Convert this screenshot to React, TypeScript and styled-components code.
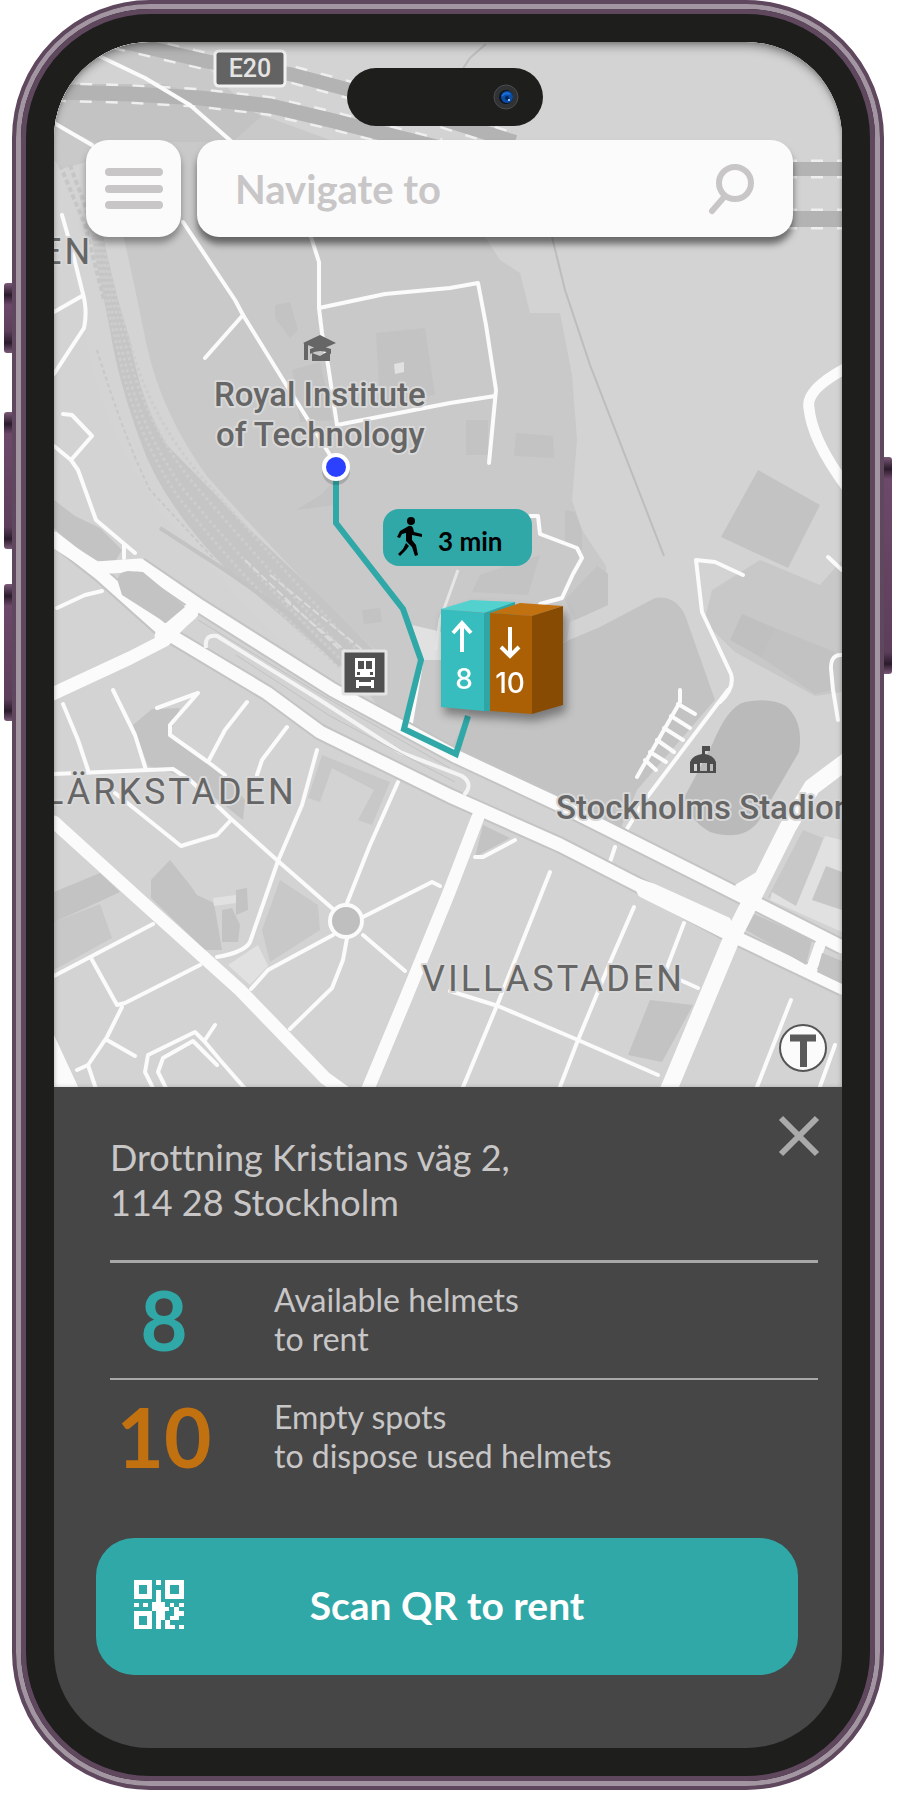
import React from "react";
import styled, { createGlobalStyle } from "styled-components";

const color = {
  frame: "#5f475e",
  frameLight: "#a495a3",
  bezel: "#1e1e1c",
  panel: "#464646",
  teal: "#30a8a8",
  orange: "#c27110",
  muted: "#c8c6c7",
  surface: "#fbfbfb",
};

const GlobalStyle = createGlobalStyle`
  * { box-sizing: border-box; }
  body {
    margin: 0;
    background: #fff;
    font-family: Lato, "Liberation Sans", sans-serif;
    font-variant-ligatures: none;
  }
  button, input { font: inherit; border: 0; padding: 0; margin: 0; background: none; }
  button { cursor: pointer; }
`;

const Stage = styled.main`
  display: flex;
  justify-content: center;
  padding: 0 14px 6px 12px;
`;

const Phone = styled.div`
  position: relative;
  flex: 1;
  min-width: 0;
  max-width: 872px;
  border-radius: 138px;
  border: 4px solid ${color.frame};
  background: ${color.bezel};
`;

const Rim = styled.div`
  border: 5px solid ${color.frameLight};
  border-radius: 134px;
`;

const Bezel = styled.div`
  border: 5px solid ${color.frame};
  border-radius: 129px;
  padding: 28px;
`;

const SideButton = styled.span<{ $side: "left" | "right"; $top: number; $height: number }>`
  position: absolute;
  ${(p) => p.$side}: -12px;
  top: ${(p) => p.$top}px;
  width: 8px;
  height: ${(p) => p.$height}px;
  border-radius: ${(p) => (p.$side === "left" ? "3px 0 0 3px" : "0 3px 3px 0")};
  background: linear-gradient(#7b5a78, #2b1a2c 12px, #6d4969 22px, #5c3e5a calc(100% - 22px), #2b1a2c calc(100% - 10px), #7b5a78);
`;

const Screen = styled.div`
  position: relative;
  border-radius: 96px;
  overflow: hidden;
  background: ${color.panel};
`;

const MapArea = styled.section`
  position: relative;
  display: flex;
  justify-content: center;
  overflow: hidden;
  background: #d3d3d3;
  &::after {
    content: "";
    position: absolute;
    inset: 0;
    pointer-events: none;
    box-shadow: inset 0 8px 10px -4px rgba(0, 0, 0, 0.38), inset 0 0 4px rgba(0, 0, 0, 0.2);
    border-radius: 96px 96px 0 0;
  }
`;

const MapDrawing = styled.svg`
  flex: none;
  display: block;
  width: 788px;
  height: 1045px;
`;

const Island = styled.div`
  position: absolute;
  z-index: 2;
  top: 26px;
  left: calc(50% - 101px);
  width: 196px;
  height: 58px;
  border-radius: 29px;
  background: ${color.bezel};
  display: flex;
  align-items: center;
  justify-content: flex-end;
  padding-right: 24px;
`;

const SearchBar = styled.form`
  position: absolute;
  z-index: 2;
  top: 98px;
  left: 32px;
  right: 49px;
  display: flex;
  gap: 16px;
  height: 97px;
`;

const MenuButton = styled.button`
  flex: none;
  width: 95px;
  border-radius: 22px;
  background: ${color.surface};
  box-shadow: 0 6px 7px rgba(0, 0, 0, 0.35);
  display: grid;
  place-items: center;
`;

const SearchField = styled.label`
  flex: 1;
  min-width: 0;
  display: flex;
  align-items: center;
  padding: 0 38px;
  border-radius: 22px;
  background: ${color.surface};
  box-shadow: 0 7px 7px rgba(0, 0, 0, 0.5);
`;

const SearchInput = styled.input`
  flex: 1;
  min-width: 0;
  height: 60px;
  font-size: 40px;
  font-weight: 700;
  color: #464646;
  outline: 0;
  &::placeholder { color: ${color.muted}; opacity: 1; }
`;

const WalkTime = styled.div`
  position: absolute;
  top: 467px;
  left: calc(50% - 65px);
  width: 149px;
  height: 57px;
  border-radius: 16px;
  background: ${color.teal};
  display: flex;
  align-items: center;
  gap: 15px;
  padding: 6px 0 0 14px;
  font-size: 26px;
  font-weight: 700;
  color: #000;
`;

const WalkIcon = styled.svg`
  margin-top: -8px;
`;

const StationPin = styled.button`
  position: absolute;
  top: 556px;
  left: calc(50% - 8px);
  filter: drop-shadow(3px 7px 5px rgba(0, 0, 0, 0.38));
  svg { display: block; }
`;

const Panel = styled.section`
  padding: 0 24px 73px 42px;
  color: ${color.muted};
`;

const PanelHeader = styled.header`
  display: flex;
  justify-content: space-between;
  align-items: flex-start;
  padding: 28px 0 35px 14px;
`;

const Address = styled.address`
  padding-top: 20px;
  font-style: normal;
  font-size: 36px;
  line-height: 45px;
`;

const CloseButton = styled.button`
  display: block;
  height: 42px;
  svg { display: block; overflow: visible; }
`;

const Facts = styled.dl`
  margin: 0 0 0 14px;
`;

const Fact = styled.div<{ $rule: number }>`
  display: flex;
  flex-direction: row-reverse;
  padding: 17px 0 20px;
  border-top: ${(p) => p.$rule}px solid #a8a8a8;
`;

const FactLabel = styled.dt`
  flex: 1;
  font-size: 32px;
  line-height: 39px;
`;

const FactValue = styled.dd<{ $color: string }>`
  width: 108px;
  margin: 0 56px 0 0;
  text-align: center;
  font-size: 82px;
  font-weight: 700;
  line-height: 78px;
  color: ${(p) => p.$color};
`;

const ScanButton = styled.button`
  display: grid;
  grid-template-columns: 50px 1fr 50px;
  align-items: center;
  width: calc(100% - 20px);
  height: 137px;
  margin-top: 43px;
  padding: 0 38px 4px;
  border-radius: 38px;
  background: ${color.teal};
  color: #fff;
  font-size: 39px;
  font-weight: 700;
`;

const MapLabel = styled.text`
  font-family: Roboto, "Liberation Sans", sans-serif;
  font-size: 33px;
  font-weight: 500;
  fill: #666;
  stroke: #d8d8d8;
  stroke-width: 4px;
  stroke-linejoin: round;
  paint-order: stroke;
`;

const DistrictLabel = styled(MapLabel)`
  font-weight: 400;
  font-size: 36px;
  letter-spacing: 3px;
`;

const BlockShapes = styled.g`
  fill: #c3c3c3;
`;

const Streets = styled.g<{ $width: number }>`
  fill: none;
  stroke: #fbfbfb;
  stroke-width: ${(p) => p.$width}px;
  stroke-linejoin: round;
  stroke-linecap: round;
`;

const Motorway = ({ d, width }: { d: string; width: number }) => (
  <g fill="none">
    <path d={d} stroke="#efefef" strokeWidth={width + 5} strokeDasharray="12 14" />
    <path d={d} stroke="#b3b3b3" strokeWidth={width} />
  </g>
);

const tracks = [
  "M92 235 Q103 290 118 350 Q134 430 176 494 Q250 590 340 668",
  "M95 235 Q106 290 122 350 Q140 430 184 490 Q262 585 350 668",
  "M98 235 Q109 290 127 350 Q146 425 194 484 Q272 575 358 666",
  "M101 235 Q112 290 132 350 Q152 420 204 480 Q284 570 366 660",
];

function CityMap() {
  return (
    <MapDrawing viewBox="54 42 788 1045" role="img" aria-label="Map of Stockholm with walking route">
      <rect x="54" y="42" width="788" height="1049" fill="#d3d3d3" />

      {/* campus and park areas */}
      <path
        fill="#c9c9c9"
        d="M54 105 H230 L262 115 L330 140 L450 150 L485 237 L500 260 L520 273 L530 313 H560 L572 375 L577 440 L572 500 L582 530 L606 566 L608 605 L570 622 L567 641 L500 660 L455 752 L385 716 L345 660 L375 650 L310 588 L260 535 L200 472 L166 425 L150 390 L137 330 L115 280 L95 210 L54 160 Z"
      />
      <path fill="#c3c3c3" d="M54 84 H190 L262 116 L232 142 H95 L54 124 Z" />
      <path fill="#c9c9c9" d="M130 42 L200 60 L250 110 L150 80 L100 54 Z" />
      <BlockShapes>
        <path d="M450 750 L480 690 L567 641 L600 627 L655 598 Q675 595 685 615 L715 700 L637 790 L620 830 L560 800 Z" />
        <path d="M275 305 L290 302 L298 330 L290 338 L275 318 Z" />
        <path d="M376 333 L425 328 L435 395 L380 402 Z" />
        <path d="M466 420 H488 V455 H466 Z M516 433 L553 436 L554 458 L514 456 Z" />
        <path d="M292 370 L320 362 L333 420 L300 422 Z M296 510 L322 494 L335 480 V505 Z" />
        <path d="M480 575 L540 555 L528 595 L472 592 Z M362 610 L380 608 L382 622 L364 624 Z" />
        <path d="M565 510 L575 512 L582 530 V550 L565 545 Z M565 600 L597 566 L608 574 V605 L575 620 Z" />
        <path d="M758 470 L820 505 L788 568 L721 537 Z" />
        <path d="M54 500 L75 516 L100 528 L122 550 L114 563 L88 559 L54 528 Z" />
        <path d="M133 725 L152 709 L180 708 L169 735 L225 775 L245 800 L243 820 L190 778 L148 766 Z" />
        <path d="M151 880 L170 860 L190 885 L197 895 L214 903 L222 950 L205 950 L151 898 Z" />
        <path d="M236 890 L247 888 L248 910 L236 915 Z M222 910 L232 908 L240 925 L238 942 L222 942 Z" />
        <path d="M650 1000 L693 1005 L662 1062 L628 1055 Z M483 825 L510 838 L475 857 Z" />
        <path d="M54 892 L100 873 L120 892 L90 906 L54 922 Z" />
      </BlockShapes>
      <g fill="#c8c8c8">
        <path d="M54 922 L100 904 L112 938 L54 970 Z" />
        <path d="M280 880 L318 905 L320 930 L270 962 L262 930 Z" />
        <path d="M322 755 L390 782 L372 825 L358 820 L374 790 L332 768 L320 802 L308 798 Z" />
        <path d="M712 590 L760 560 L820 585 L842 560 V692 L815 696 L735 652 L704 622 Z" />
        <path d="M803 830 L823 838 L797 912 L768 897 Z" />
      </g>
      <path fill="#c0c0c0" d="M742 614 L775 628 L762 658 L730 640 Z" />
      <path fill="#c2c2c2" d="M775 628 L835 652 L832 690 L815 694 L762 658 Z" />
      <path
        fill="#bababa"
        d="M745 702 Q770 697 786 706 Q804 722 799 752 L758 822 Q742 842 710 832 Q686 818 685 796 L712 745 Q728 706 745 702 Z"
      />
      <g fill="#e1e1e1">
        <path d="M412 625 L442 632 V660 H422 Z" />
        <path d="M825 836 L842 840 V932 L770 900 L772 892 L796 906 Z" />
        <path d="M213 898 L236 895 V903 L214 906 Z M228 965 L258 945 L268 966 L250 985 Z M394 364 L404 362 V372 L395 374 Z" />
      </g>
      <path fill="#c6c6c6" d="M826 866 L842 872 V910 L812 900 Z" />

      {/* railway yard */}
      <g fill="none">
        <path d="M76 165 Q96 240 118 350 Q134 425 184 494 Q260 580 350 668" stroke="#d4d4d4" strokeWidth="58" />
        <path
          d="M91 235 H103 Q114 290 130 340 Q140 400 166 444 L250 530 L320 596 L374 650 L343 668 L300 632 L225 568 Q160 500 140 440 Q118 380 110 330 Z"
          fill="#c5c5c5"
        />
        {tracks.map((d) => (
          <path key={d} d={d} stroke="#cdcdcd" strokeWidth="3" strokeDasharray="3 3" />
        ))}
        <path d="M97 350 Q125 440 150 490 L215 560" stroke="#c8c8c8" strokeWidth="2" strokeDasharray="4 3" />
        <path d="M60 165 L85 225 L104 300 M70 165 L94 230" stroke="#c6c6c6" strokeWidth="4" strokeDasharray="5 3" />
        <path d="M160 528 L225 570 L290 615 L340 665" stroke="#c3c3c3" strokeWidth="4" />
        <path d="M270 575 L365 652 M285 600 L350 655 M245 560 L340 650" stroke="#dadada" strokeWidth="2" strokeDasharray="8 3" />
      </g>

      {/* tunnels */}
      <g fill="none" stroke="#bdbdbd" strokeWidth="2">
        <path d="M552 237 L565 290 L590 365 L664 556" />
        <path d="M486 44 L470 58 L462 70" />
      </g>
      <Motorway d="M115 40 L210 62 L290 74 L350 90 L420 112 L515 142" width={14} />
      <Motorway d="M54 92 L130 94 L200 98 L270 106 L330 120 L440 148" width={15} />
      <Motorway d="M785 169 H842" width={14} />
      <Motorway d="M785 219 H842" width={16} />

      <Streets $width={4}>
        <path d="M95 54 L145 78 L190 105 L232 142 M54 123 L92 145 M183 222 L235 300 L243 315 L285 383 L330 455" />
        <path d="M243 315 L205 358 M311 237 L319 262 V308 L322 333 L328 365 L337 425" />
        <path d="M319 308 L385 294 L450 288 L478 283 L486 325 L496 390 L489 463 M337 425 L450 403 L495 396" />
        <path d="M62 215 L72 250 L82 290 Q88 310 84 328 L54 374 M82 296 L54 312" />
        <path d="M63 414 L72 415 L92 436 L71 460 L54 446 M71 460 L78 470 L96 520 L135 553 M124 545 V558" />
        <path d="M530 516 H538 L540 534 L577 548 L582 558 L573 574 L562 598 L540 604" />
        <path d="M720 702 Q735 688 731 674 L702 612 L696 560 L715 562 L743 575 M828 557 L842 570" />
        <path d="M842 655 Q831 654 831 668 L833 690 L838 720" />
        <path d="M728 690 L645 800 L625 832 M680 690 V702 L637 777 M615 847 L609 865" />
        <path d="M678 704 L695 714 M671 716 L690 728 M664 728 L683 740 M657 740 L674 752 M650 752 L666 762 M645 760 L656 770" />
        <path d="M63 704 L78 740 L88 770 M54 774 L173 769 L190 780 L230 818 L278 861 L333 909" />
        <path d="M113 690 L135 735 L146 770 M157 708 L198 693 L170 725 V735 L208 762 L225 775 M247 702 L225 730 L208 762" />
        <path d="M287 727 L262 760 L257 775 M317 750 L302 805 L278 861 L250 942 Q245 952 217 957 M398 782 L370 845 L347 903" />
        <path d="M115 793 L181 846 L217 835 L231 820 M54 976 L153 924 M91 958 L117 1005 L125 1003 L200 965" />
        <path d="M122 1007 L107 1037 L88 1065 L77 1070 M107 1040 L135 1056 M88 1065 L97 1092" />
        <path d="M155 1092 L145 1072 L148 1055 L195 1032 L205 1042 L220 1060 L248 1092 M168 1092 L158 1072 L163 1058 L193 1041 L217 1065 M205 1040 L215 1025" />
        <path d="M363 917 L432 882 L440 886 M333 935 L268 970 L251 989 M347 938 L343 960 L332 988 L290 1029 M363 935 L405 971" />
        <path d="M550 872 L498 1003 L461 1092 M634 907 L611 960 L578 1040 L558 1092 M684 923 L666 970 M450 991 L498 1006 L578 1040 L658 1075 M680 980 L698 988" />
        <path d="M791 1000 L755 1092 M835 1045 L818 1092 M475 857 H483 L515 840 M57 608 L85 595 L102 591" />
        <path d="M410 729 L421 664" />
      </Streets>
      <path d="M458 570 L440 620 L436 650" fill="none" stroke="#e6e6e6" strokeWidth="3" />
      <circle cx="346" cy="921" r="16" fill="#bfbfbf" stroke="#fbfbfb" strokeWidth="4" />

      {/* avenues */}
      <g fill="none" stroke="#c4c4c4" strokeWidth="17">
        <path d="M140 565 L200 606 L333 690 L455 756 L560 805 L735 893 L842 947 M54 538 L100 574 L165 632 L267 693 L320 732 L450 796 L560 845 L640 886 L725 932 L842 988" />
      </g>
      <Streets $width={13}>
        <path d="M54 541 L96 568 L140 565 L200 606 L333 690 L455 756 L560 805 L735 893 L842 947" />
        <path d="M54 538 L100 574 L165 632 L267 693 L320 732 L450 796 L560 845 L640 886 L725 932 L842 988" />
        <path d="M185 618 L165 640 L130 658 L48 696 M54 822 L140 900 L240 990 L325 1078 L350 1096" />
        <path d="M478 817 L448 895 L405 1000 L365 1096" />
      </Streets>
      <Streets $width={17}>
        <path d="M848 760 L812 787 L788 827 L758 887 L731 940 L666 1096 M190 612 L163 636 M645 890 L725 930" />
      </Streets>
      <Streets $width={11}>
        <path d="M846 368 Q805 390 809 408 Q812 440 846 486 M820 945 L813 965" />
      </Streets>
      <path fill="#fbfbfb" d="M54 1035 L80 1091 H54 Z M620 872 L655 884 L730 918 L738 938 L650 900 Z M735 885 L760 870 L750 905 Z" />
      <path fill="#c3c3c3" d="M118 582 Q117 572 128 571 L143 572 L185 607 L166 623 L122 595 Z M746 930 L754 914 L812 940 L806 965 Z M822 953 L842 961 V984 L817 972 Z" />
      <g fill="none">
        <path d="M206 648 Q204 634 217 636 L320 700 L400 752 L462 776 Q474 784 464 795" stroke="#f4f4f4" strokeWidth="4" />
        <path d="M198 620 L320 694 L450 768 M236 655 L330 716 L455 782" stroke="#c2c2c2" strokeWidth="1" />
      </g>

      {/* labels */}
      <MapLabel x="214" y="406">Royal Institute</MapLabel>
      <MapLabel x="216" y="446">of Technology</MapLabel>
      <MapLabel x="556" y="819">Stockholms Stadion</MapLabel>
      <DistrictLabel x="41" y="264">EN</DistrictLabel>
      <DistrictLabel x="44" y="804">LÄRKSTADEN</DistrictLabel>
      <DistrictLabel x="422" y="991">VILLASTADEN</DistrictLabel>
      <rect x="215" y="51" width="70" height="35" rx="4" fill="#636363" stroke="#f0f0f0" strokeWidth="3" />
      <text x="250" y="77" textAnchor="middle" fontFamily="Roboto, sans-serif" fontSize="25" fontWeight="500" fill="#e4e4e4">E20</text>

      {/* point-of-interest symbols */}
      <path
        fill="#666"
        d="M303 343 L320 335 L336 343 L320 350 Z M304 343 h4 v17 h-4 Z M310 349 Q320 344 331 349 V354 Q320 348 310 354 Z M312 353 L320 356 L330 350 V361 H312 Z"
      />
      <path
        fill="#4d4d4d"
        fillRule="evenodd"
        d="M702 746 H710 V751 H705 V754 Q713 755 716 762 V773 H690 V762 Q693 755 702 754 Z M694 764 V771 H697 V764 Z M700 763 V771 H707 V763 Z M710 764 V771 H713 V764 Z"
      />
      <g>
        <rect x="343" y="651" width="43" height="43" rx="1" fill="#505050" stroke="#e4e4e4" strokeWidth="3" />
        <path fill="#fff" fillRule="evenodd" d="M355 658 H375 V677 H355 Z M358 661 V669 H364 V661 Z M366 661 V669 H372 V661 Z M357 672 V675 H360 V672 Z M370 672 V675 H373 V672 Z M356 680 H359 V682 H371 V680 H374 V688 H371 V686 H359 V688 H356 Z" />
      </g>
      <circle cx="803" cy="1048" r="23" fill="#fbfbfb" stroke="#555" strokeWidth="2" />
      <path d="M790 1038 H816 M803.5 1038 V1067" stroke="#5a5a5a" strokeWidth="7" />

      {/* walking route */}
      <path d="M336 478 V523 L403 609 L421 660 L404 729 L456 754 L468 716" fill="none" stroke={color.teal} strokeWidth="6" />
      <circle cx="336" cy="471" r="14" fill="#000" opacity="0.16" />
      <circle cx="336" cy="467" r="14" fill="#fff" />
      <circle cx="336" cy="467" r="10" fill="#2b41ff" />
    </MapDrawing>
  );
}

function Station() {
  return (
    <StationPin type="button" aria-label="Helmet station">
      <svg width="126" height="118" viewBox="440 598 126 118" fontFamily="Inter, sans-serif" fontSize="28" fontWeight="500" textAnchor="middle">
        <path fill="#53d1cf" d="M441 609 L471 600 L515 602 V606 L486 613 Z" />
        <path fill="#38bdbe" d="M441 609 L484 613 V711 L441 707 Z" />
        <path fill="#2fa6a5" d="M484 613 L515 602 V711 H484 Z" />
        <path fill="#c27110" d="M490 613 L520 603 L563 606 L532 616 Z" />
        <path fill="#ab6006" d="M490 613 L532 616 V714 L490 711 Z" />
        <path fill="#874b03" d="M532 616 L563 606 V705 L532 714 Z" />
        <g fill="none" stroke="#fff" strokeWidth="4">
          <path d="M462 652 V625 M453 633 L462 623 L471 633" />
          <path d="M510 627 V655 M501 647 L510 656 L519 647" />
        </g>
        <text x="464" y="689" fill="#fff">8</text>
        <text x="510" y="693" fill="#fff">10</text>
      </svg>
    </StationPin>
  );
}

function QrIcon() {
  return (
    <svg width="50" height="50" viewBox="0 0 50 50" fill="#fff" aria-hidden="true">
      <path fillRule="evenodd" d="M0 0 H18 V19 H0 Z M5 5 V14 H13 V5 Z M31 0 H50 V19 H31 Z M36 5 V14 H45 V5 Z M0 31 H18 V49 H0 Z M5 36 V45 H13 V36 Z" />
      <path d="M22 0 h5 v5 h-5 Z M22 10 h5 v12 h4 v5 h4 v4 h-4 v9 h-4 v9 h-5 v-18 h-4 v-9 h4 Z M0 23 h5 v4 h-5 Z M9 23 h5 v4 h-5 Z M36 23 h4 v4 h-4 Z M45 23 h5 v4 h-5 Z M40 27 h5 v4 h-5 Z M45 31 h5 v5 h-5 v4 h-9 v-4 h4 v-5 h5 Z M31 40 h5 v5 h5 v4 h-10 Z M45 45 h5 v4 h-5 Z" />
    </svg>
  );
}

const facts = [
  { value: 8, tint: color.teal, lines: ["Available helmets", "to rent"], rule: 3 },
  { value: 10, tint: color.orange, lines: ["Empty spots", "to dispose used helmets"], rule: 2 },
];

export default function App() {
  return (
    <>
      <GlobalStyle />
      <Stage>
        <Phone>
          <SideButton $side="left" $top={279} $height={70} />
          <SideButton $side="left" $top={408} $height={137} />
          <SideButton $side="left" $top={580} $height={137} />
          <SideButton $side="right" $top={453} $height={217} />
          <Rim>
            <Bezel>
              <Screen>
                <Island>
                  <svg width="26" height="26" viewBox="0 0 26 26" aria-hidden="true">
                    <circle cx="13" cy="13" r="12" fill="#303234" stroke="#4b4d50" />
                    <circle cx="13" cy="13" r="7" fill="#0b1420" />
                    <circle cx="14" cy="13" r="6" fill="#0a4da8" />
                    <path d="M9 12 Q12 8 17 10" stroke="#1b6fd6" strokeWidth="2" fill="none" />
                    <circle cx="14" cy="14" r="2" fill="#06254f" />
                    <circle cx="16" cy="16" r="1" fill="#cfe2ff" />
                  </svg>
                </Island>
                <MapArea>
                  <CityMap />
                  <SearchBar role="search">
                    <MenuButton type="button" aria-label="Menu">
                      <svg width="60" height="44" viewBox="0 0 60 44" stroke={color.muted} strokeWidth="8" strokeLinecap="round">
                        <path d="M5 5 H55 M5 22 H55 M5 38 H55" />
                      </svg>
                    </MenuButton>
                    <SearchField>
                      <SearchInput type="text" placeholder="Navigate to" aria-label="Navigate to" />
                      <svg width="48" height="54" viewBox="0 0 48 54" fill="none" stroke={color.muted} strokeWidth="6" aria-hidden="true">
                        <circle cx="28" cy="21" r="16" />
                        <path d="M18 34 L5 49" strokeLinecap="round" />
                      </svg>
                    </SearchField>
                  </SearchBar>
                  <WalkTime>
                    <WalkIcon width="26" height="40" viewBox="0 0 26 40" aria-hidden="true">
                      <circle cx="14" cy="4" r="4" />
                      <path d="M10 10 Q14 7 16 11 L17 15 L25 17 V20 L15 18 L15 23 L19 28 L21 38 L18 39 L15 30 L9 24 L9 16 L5 17 L3 21 L0 20 L3 14 Z" />
                      <path d="M9 26 L12 29 L9 33 L3 39 L1 37 L6 32 Z" />
                    </WalkIcon>
                    3 min
                  </WalkTime>
                  <Station />
                </MapArea>
                <Panel>
                  <PanelHeader>
                    <Address>
                      Drottning Kristians väg 2,
                      <br />
                      114 28 Stockholm
                    </Address>
                    <CloseButton type="button" aria-label="Close">
                      <svg width="38" height="42" viewBox="2 0 38 42" stroke="#aaa" strokeWidth="6">
                        <path d="M3 3 L39 39 M39 3 L3 39" />
                      </svg>
                    </CloseButton>
                  </PanelHeader>
                  <Facts>
                    {facts.map((f) => (
                      <Fact key={f.value} $rule={f.rule}>
                        <FactLabel>
                          {f.lines[0]}
                          <br />
                          {f.lines[1]}
                        </FactLabel>
                        <FactValue $color={f.tint}>{f.value}</FactValue>
                      </Fact>
                    ))}
                  </Facts>
                  <ScanButton type="button">
                    <QrIcon />
                    <span>Scan QR to rent</span>
                  </ScanButton>
                </Panel>
              </Screen>
            </Bezel>
          </Rim>
        </Phone>
      </Stage>
    </>
  );
}
